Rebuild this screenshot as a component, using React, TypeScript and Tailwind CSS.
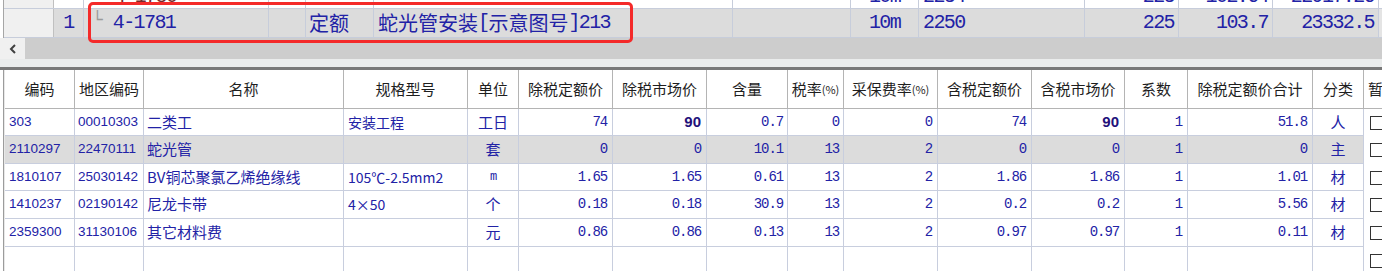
import React from 'react';

const cjk = "font-['Noto_Sans_CJK_SC',sans-serif]";
const mono = "font-['Liberation_Mono','Noto_Sans_CJK_SC',monospace] tracking-[-1.1px]";
const sans = "font-['Liberation_Sans','Noto_Sans_CJK_SC',sans-serif]";

type Col = { w: string; head: React.ReactNode; align: string; font: string };

const cols: Col[] = [
  { w: 'w-[70px]', head: '编码', align: 'justify-start pl-[4px]', font: `${sans} text-[13.5px]` },
  { w: 'w-[69px]', head: '地区编码', align: 'justify-start pl-[3px]', font: `${sans} text-[13.5px]` },
  { w: 'w-[200px]', head: '名称', align: 'justify-start pl-[3px]', font: `${cjk} text-[15px]` },
  { w: 'w-[124px]', head: '规格型号', align: 'justify-start pl-[4px]', font: `${cjk} text-[14px]` },
  { w: 'w-[51px]', head: '单位', align: 'justify-center', font: `${cjk} text-[15px]` },
  { w: 'w-[94px]', head: '除税定额价', align: 'justify-end pr-[5px]', font: `${mono} text-[14px]` },
  { w: 'w-[94px]', head: '除税市场价', align: 'justify-end pr-[5px]', font: `${mono} text-[14px]` },
  { w: 'w-[81px]', head: '含量', align: 'justify-end pr-[4px]', font: `${mono} text-[14px]` },
  { w: 'w-[56px]', head: <>税率<span className="text-[11px]">(%)</span></>, align: 'justify-end pr-[4px]', font: `${mono} text-[14px]` },
  { w: 'w-[94px]', head: <>采保费率<span className="text-[11px]">(%)</span></>, align: 'justify-end pr-[5px]', font: `${mono} text-[14px]` },
  { w: 'w-[94px]', head: '含税定额价', align: 'justify-end pr-[5px]', font: `${mono} text-[14px]` },
  { w: 'w-[93px]', head: '含税市场价', align: 'justify-end pr-[5px]', font: `${mono} text-[14px]` },
  { w: 'w-[63px]', head: '系数', align: 'justify-end pr-[5px]', font: `${mono} text-[14px]` },
  { w: 'w-[125px]', head: '除税定额价合计', align: 'justify-end pr-[5px]', font: `${mono} text-[14px]` },
  { w: 'w-[51px]', head: '分类', align: 'justify-center', font: `${cjk} text-[15px]` },
];

const rows: { cells: string[]; sel?: boolean; h: string }[] = [
  { h: 'h-[27px]', cells: ['303', '00010303', '二类工', '安装工程', '工日', '74', '90', '0.7', '0', '0', '74', '90', '1', '51.8', '人'] },
  { h: 'h-[28px]', sel: true, cells: ['2110297', '22470111', '蛇光管', '', '套', '0', '0', '10.1', '13', '2', '0', '0', '1', '0', '主'] },
  { h: 'h-[27px]', cells: ['1810107', '25030142', 'BV铜芯聚氯乙烯绝缘线', '105℃-2.5mm2', 'm', '1.65', '1.65', '0.61', '13', '2', '1.86', '1.86', '1', '1.01', '材'] },
  { h: 'h-[28px]', cells: ['1410237', '02190142', '尼龙卡带', '4×50', '个', '0.18', '0.18', '30.9', '13', '2', '0.2', '0.2', '1', '5.56', '材'] },
  { h: 'h-[28px]', cells: ['2359300', '31130106', '其它材料费', '', '元', '0.86', '0.86', '0.13', '13', '2', '0.97', '0.97', '1', '0.11', '材'] },
  { h: 'h-[28px]', cells: ['', '', '', '', '', '', '', '', '', '', '', '', '', '', ''] },
];

const Check = () => <span className="block w-[14px] h-[14px] border border-[#333] bg-white" />;

const topMono = "font-['Liberation_Mono','Noto_Sans_CJK_SC',monospace] text-[20px] tracking-[-1.6px]";

export default function App() {
  return (
    <div className="relative w-[1382px] h-[271px] overflow-hidden bg-white text-[#2222a6]">
      {/* upper grid */}
      <div className="h-[38px] overflow-hidden pl-[3px]">
        <div className="border-l border-[#a6a6a6]">
          {/* partially hidden row above */}
          <div className="flex h-[30px] -mt-[21px] pt-[6px] border-b border-[#c7cddb] whitespace-nowrap">
            <div className="w-[50px] shrink-0 bg-[#f0f0f0] border-r border-[#c0c0c0]" />
            <div className={`w-[30px] shrink-0 border-r border-[#c7cddb] flex items-center justify-center ${topMono}`}>−</div>
            <div className={`w-[185px] shrink-0 border-r border-[#c7cddb] flex items-center pl-[30px] text-[#7a2a2a] ${topMono}`}>4-1780</div>
            <div className="w-[37px] shrink-0 border-r border-[#c7cddb]" />
            <div className="w-[68px] shrink-0 border-r border-[#c7cddb]" />
            <div className="w-[359px] shrink-0 border-r border-[#c7cddb]" />
            <div className="w-[118px] shrink-0 border-r border-[#c7cddb]" />
            <div className={`w-[68px] shrink-0 border-r border-[#c7cddb] flex items-center justify-center ${topMono}`}>10m</div>
            <div className={`w-[166px] shrink-0 border-r border-[#c7cddb] flex items-center pl-[4px] ${topMono}`}>2234</div>
            <div className={`w-[94px] shrink-0 border-r border-[#c7cddb] flex items-center justify-end pr-[4px] ${topMono}`}>223</div>
            <div className={`w-[94px] shrink-0 border-r border-[#c7cddb] flex items-center justify-end pr-[4px] ${topMono}`}>102.64</div>
            <div className={`w-[106px] shrink-0 border-r border-[#c7cddb] flex items-center justify-end pr-[4px] ${topMono}`}>22917.26</div>
            <div className="w-[40px] shrink-0" />
          </div>
          {/* current row */}
          <div className="flex h-[29px] border-b border-[#c7cddb] whitespace-nowrap">
            <div className="w-[50px] shrink-0 bg-[#f0f0f0] border-r border-[#c0c0c0]" />
            <div className={`w-[30px] shrink-0 bg-[#dcdcdc] border-r border-[#c7cddb] flex items-center justify-center ${topMono}`}>1</div>
            <div className={`w-[185px] shrink-0 bg-[#dcdcdc] border-r border-[#c7cddb] flex items-center pl-[8px] ${topMono}`}>
              <span className="text-[#9a9a9a] text-[18px] tracking-normal mr-[10px] -mt-[6px]">└</span>4-1781
            </div>
            <div className="w-[37px] shrink-0 bg-[#dcdcdc] border-r border-[#c7cddb]" />
            <div className={`w-[68px] shrink-0 bg-[#dcdcdc] border-r border-[#c7cddb] flex items-center pl-[3px] ${cjk} text-[20px]`}>定额</div>
            <div className={`w-[359px] shrink-0 bg-[#dcdcdc] border-r border-[#c7cddb] flex items-center pl-[4px] ${topMono}`}>
              <span className={`${cjk} text-[20px] tracking-normal`}>蛇光管安装</span>[
              <span className={`${cjk} text-[20px] tracking-normal`}>示意图号</span>]213
            </div>
            <div className="w-[118px] shrink-0 bg-[#dcdcdc] border-r border-[#c7cddb]" />
            <div className={`w-[68px] shrink-0 bg-[#dcdcdc] border-r border-[#c7cddb] flex items-center justify-center ${topMono}`}>10m</div>
            <div className={`w-[166px] shrink-0 bg-[#dcdcdc] border-r border-[#c7cddb] flex items-center pl-[4px] ${topMono}`}>2250</div>
            <div className={`w-[94px] shrink-0 bg-[#dcdcdc] border-r border-[#c7cddb] flex items-center justify-end pr-[4px] ${topMono}`}>225</div>
            <div className={`w-[94px] shrink-0 bg-[#dcdcdc] border-r border-[#c7cddb] flex items-center justify-end pr-[4px] ${topMono}`}>103.7</div>
            <div className={`w-[106px] shrink-0 bg-[#dcdcdc] border-r border-[#c7cddb] flex items-center justify-end pr-[4px] ${topMono}`}>23332.5</div>
            <div className="w-[40px] shrink-0 bg-[#e4e4e4]" />
          </div>
        </div>
      </div>

      {/* horizontal scrollbar */}
      <div className="flex h-[21px]">
        <div className="w-[25px] bg-[#f0f0f0] flex items-center justify-center">
          <svg width="8" height="10" viewBox="0 0 8 10">
            <path d="M6 1 L2 5 L6 9" fill="none" stroke="#404040" strokeWidth="2" />
          </svg>
        </div>
        <div className="flex-1 bg-[#cdcdcd]" />
      </div>
      <div className="h-[8px] bg-[#eaecec]" />
      <div className="h-[3px] bg-[#787878]" />

      {/* lower grid */}
      <div className="ml-[3px] border-l border-[#9c9c9c] pl-[1px] bg-[#e8e8e8]">
        <div className="flex h-[39px] bg-white border-b border-[#b4b4b4] whitespace-nowrap">
          {cols.map((c, i) => (
            <div key={i} className={`${c.w} shrink-0 border-r border-[#b4b4b4] flex items-center justify-center ${cjk} text-[15px] text-[#1e1e1e]`}>
              {c.head}
            </div>
          ))}
          <div className={`w-[40px] shrink-0 flex items-center pl-[4px] ${cjk} text-[15px] text-[#1e1e1e]`}>暂</div>
        </div>
        {rows.map((r, ri) => (
          <div key={ri} className={`flex ${r.h} whitespace-nowrap`}>
            {r.cells.map((v, ci) => {
              const c = cols[ci];
              const bold = ri === 0 && (ci === 6 || ci === 11);
              const unitM = ci === 4 && v === 'm';
              return (
                <div
                  key={ci}
                  className={`${c.w} shrink-0 border-r border-b border-[#c8cede] flex items-center ${c.align} ${r.sel ? 'bg-[#dcdcdc]' : 'bg-white'} ${unitM ? `${mono} text-[12px]` : c.font} ${bold ? "font-bold text-[#22107a] text-[15px] font-['Liberation_Sans',sans-serif] tracking-normal" : ''}`}
                >
                  {v}
                </div>
              );
            })}
            <div className="w-[40px] shrink-0 bg-white flex items-center pl-[6px]">
              <Check />
            </div>
          </div>
        ))}
      </div>

      {/* red highlight box */}
      <div className="absolute left-[88px] top-[2px] w-[545px] h-[41px] border-[3px] border-[#f42a2a] rounded-[5px] pointer-events-none" />
    </div>
  );
}
